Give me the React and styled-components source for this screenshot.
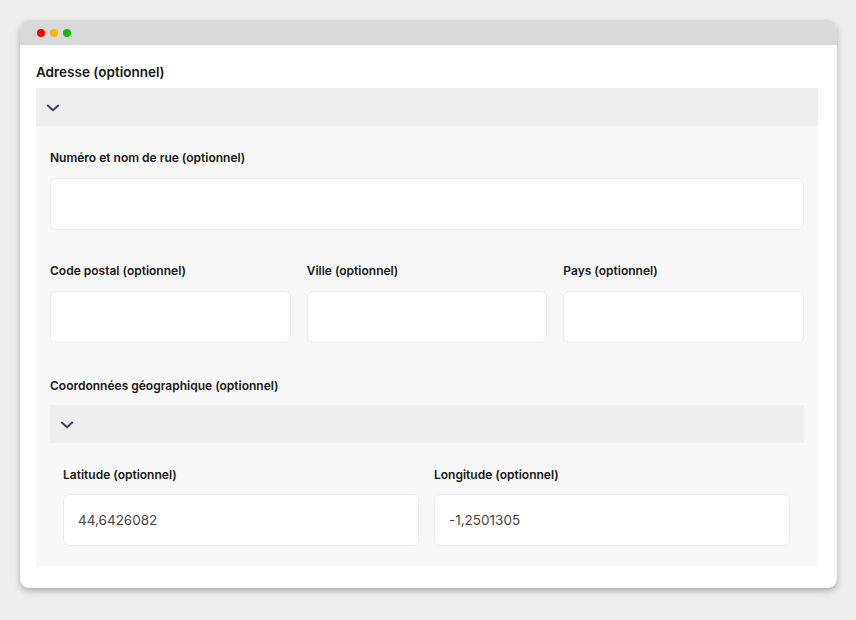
import React from "react";
import styled, { createGlobalStyle } from "styled-components";

const Global = createGlobalStyle`
  html, body { margin: 0; padding: 0; background: #eeeeee; }
  body { font-family: Inter, "Liberation Sans", Arial, sans-serif; color: #1c1c1c; }
  * { box-sizing: border-box; }
`;

const Page = styled.div`
  padding: 20px 19px 32px 20px;
`;

const Window = styled.div`
  background: #ffffff;
  border-radius: 9px;
  overflow: hidden;
  box-shadow: 0 3px 6px rgba(0, 0, 0, 0.28);
  height: 568px;
  display: flex;
  flex-direction: column;
`;

const TitleBar = styled.div`
  height: 25px;
  background: #d9d9d9;
  display: flex;
  align-items: center;
  gap: 5px;
  padding-left: 17px;
  flex-shrink: 0;
`;

const Dot = styled.span`
  width: 8px;
  height: 8px;
  border-radius: 50%;
  background: ${(p) => p.$c};
`;

const Body = styled.div`
  padding: 17px 19px 0 16px;
`;

const Heading = styled.div`
  font-size: 13.5px;
  font-weight: 600;
  line-height: 20px;
  margin-bottom: 6px;
  color: #161616;
`;

const AccHeader = styled.div`
  height: 38px;
  background: #efefef;
  display: flex;
  align-items: center;
  padding: 1px 0 0 ${(p) => p.$pad || 10}px;
  color: #3f4556;
`;

const Panel = styled.div`
  background: #f8f8f8;
  padding: ${(p) => p.$pad};
  display: flex;
  flex-direction: column;
`;

const Field = styled.div`
  display: flex;
  flex-direction: column;
  min-width: 0;
`;

const Label = styled.label`
  font-size: 12px;
  font-weight: 600;
  line-height: 16px;
  color: #161616;
  margin-bottom: ${(p) => p.$mb || 13}px;
`;

const Input = styled.div`
  height: 52px;
  background: #ffffff;
  border: 1px solid #ececec;
  border-radius: 6px;
  display: flex;
  align-items: center;
  padding-left: 14px;
  font-size: 13.5px;
  color: #454545;
`;

const Row = styled.div`
  display: grid;
  grid-template-columns: repeat(${(p) => p.$cols}, 1fr);
  gap: ${(p) => p.$gap}px;
  margin-top: ${(p) => p.$mt || 0}px;
`;

const Section = styled.div`
  margin-top: ${(p) => p.$mt || 0}px;
  display: flex;
  flex-direction: column;
`;

const Chevron = () => (
  <svg width="14" height="8" viewBox="0 0 14 8" fill="none">
    <path d="M1.8 1.6L7 6.2L12.2 1.6" stroke="currentColor" strokeWidth="2" strokeLinecap="round" strokeLinejoin="round" />
  </svg>
);

export default function App() {
  return (
    <>
      <Global />
      <Page>
        <Window>
          <TitleBar>
            <Dot $c="#fe0000" />
            <Dot $c="#f5b400" />
            <Dot $c="#12b90f" />
          </TitleBar>
          <Body>
            <Heading>Adresse (optionnel)</Heading>
            <AccHeader>
              <Chevron />
            </AccHeader>
            <Panel $pad="24px 14px 0 14px">
              <Field>
                <Label $mb={12}>Numéro et nom de rue (optionnel)</Label>
                <Input />
              </Field>
              <Row $cols={3} $gap={16} $mt={33}>
                <Field>
                  <Label $mb={12}>Code postal (optionnel)</Label>
                  <Input />
                </Field>
                <Field>
                  <Label $mb={12}>Ville (optionnel)</Label>
                  <Input />
                </Field>
                <Field>
                  <Label $mb={12}>Pays (optionnel)</Label>
                  <Input />
                </Field>
              </Row>
              <Section $mt={35}>
                <Label $mb={11}>Coordonnées géographique (optionnel)</Label>
                <AccHeader $pad={10}>
                  <Chevron />
                </AccHeader>
                <Panel $pad="24px 14px 20px 13px">
                  <Row $cols={2} $gap={15}>
                    <Field>
                      <Label $mb={11}>Latitude (optionnel)</Label>
                      <Input>44,6426082</Input>
                    </Field>
                    <Field>
                      <Label $mb={11}>Longitude (optionnel)</Label>
                      <Input>-1,2501305</Input>
                    </Field>
                  </Row>
                </Panel>
              </Section>
            </Panel>
          </Body>
        </Window>
      </Page>
    </>
  );
}
